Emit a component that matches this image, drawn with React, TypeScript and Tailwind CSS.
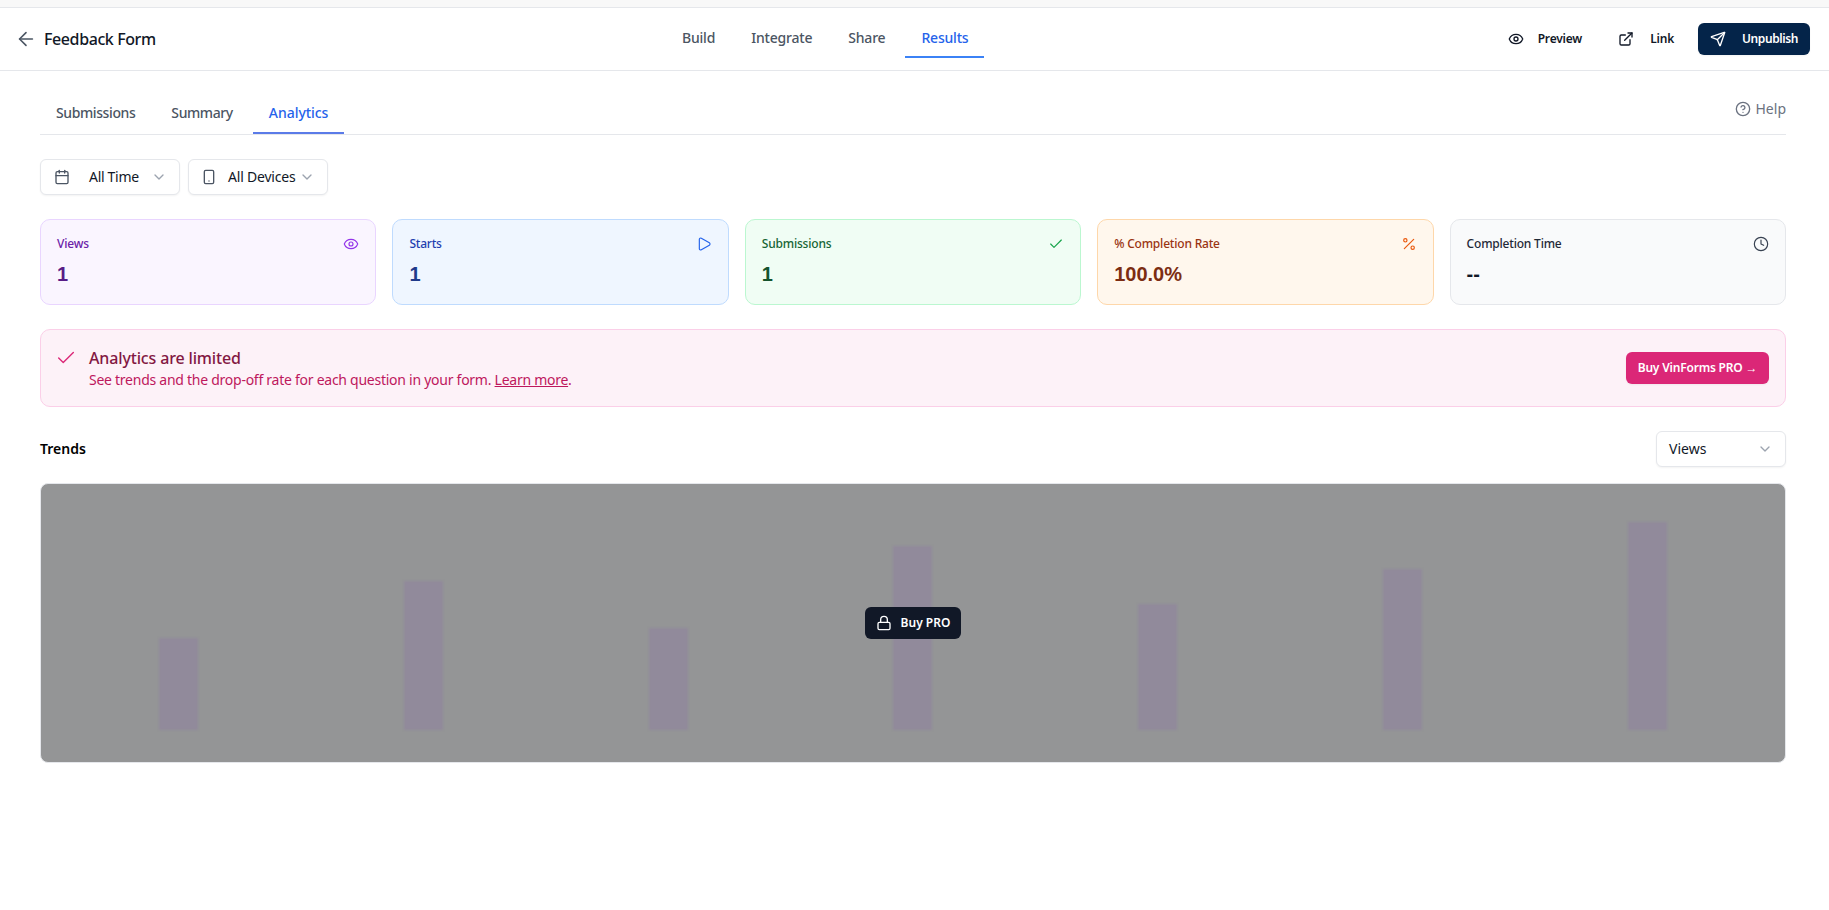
import {
  ArrowLeft,
  Calendar,
  Check,
  ChevronDown,
  CircleHelp,
  Clock,
  ExternalLink,
  Eye,
  Lock,
  Percent,
  Play,
  Send,
  Smartphone,
} from "lucide-react";

const headerTabs = ["Build", "Integrate", "Share", "Results"];
const subTabs = ["Submissions", "Summary", "Analytics"];

const stats = [
  { label: "Views", value: "1", Icon: Eye, box: "border-[#e9d5ff] bg-[#faf5ff]", labelText: "text-[#6b21a8]", valueText: "text-[#581c87]", iconText: "text-[#9333ea]" },
  { label: "Starts", value: "1", Icon: Play, box: "border-[#bfdbfe] bg-[#eff6ff]", labelText: "text-[#1e40af]", valueText: "text-[#1e3a8a]", iconText: "text-[#2563eb]" },
  { label: "Submissions", value: "1", Icon: Check, box: "border-[#bbf7d0] bg-[#f0fdf4]", labelText: "text-[#166534]", valueText: "text-[#14532d]", iconText: "text-[#16a34a]" },
  { label: "% Completion Rate", value: "100.0%", Icon: Percent, box: "border-[#fed7aa] bg-[#fff7ed]", labelText: "text-[#9a3412]", valueText: "text-[#7c2d12]", iconText: "text-[#ea580c]" },
  { label: "Completion Time", value: "--", Icon: Clock, box: "border-[#e5e7eb] bg-[#f9fafb]", labelText: "text-[#1f2937]", valueText: "text-[#111827]", iconText: "text-[#374151]" },
];

const barHeights = [92, 149, 102, 184, 126, 161, 208];

export default function App() {
  return (
    <div className="h-[910px] overflow-hidden bg-white font-['Noto_Sans',sans-serif] text-[#111827]">
      <div className="h-2 border-b border-[#e5e7eb] bg-[#f8f8f8]" />

      <header className="flex h-[63px] items-start border-b border-[#e5e7eb] pr-[19px]">
        <div className="flex h-[62px] w-[666px] items-center gap-[7px] pl-[15px]">
          <ArrowLeft className="h-[22px] w-[22px] text-[#4b5563]" strokeWidth={1.75} />
          <span className="text-base font-medium tracking-[-0.4px]">Feedback Form</span>
        </div>
        <nav className="mt-2 flex items-start gap-1">
          {headerTabs.map((tab) => (
            <button
              key={tab}
              type="button"
              className={`flex h-[42px] items-center border-b-2 px-4 pt-1 text-sm font-medium tracking-[-0.2px] ${
                tab === "Results" ? "border-[#3b82f6] text-[#2563eb]" : "border-transparent text-[#4b5563]"
              }`}
            >
              {tab}
            </button>
          ))}
        </nav>
        <div className="ml-auto flex h-[62px] items-center">
          <button type="button" className="flex items-center gap-[14px] text-xs font-semibold tracking-[-0.2px]">
            <Eye className="h-4 w-4" />
            Preview
          </button>
          <button type="button" className="ml-9 flex items-center gap-4 text-xs font-semibold tracking-[-0.2px]">
            <ExternalLink className="h-4 w-4" />
            Link
          </button>
          <button
            type="button"
            className="ml-6 flex h-8 w-[112px] items-center gap-4 rounded-md bg-[#042449] pl-3 text-xs font-semibold tracking-[-0.4px] text-white shadow-xs"
          >
            <Send className="h-4 w-4" />
            Unpublish
          </button>
        </div>
      </header>

      <main className="ml-10 w-[1746px]">
        <div className="flex h-16 items-end justify-between border-b border-[#e5e7eb]">
          <div className="flex gap-1">
            {subTabs.map((tab) => (
              <button
                key={tab}
                type="button"
                className={`h-10 border-b-2 px-4 text-sm font-medium ${
                  tab === "Analytics"
                    ? "border-[#5b7be8] tracking-[-0.05px] text-[#2563eb]"
                    : "border-transparent tracking-[-0.4px] text-[#4b5563]"
                }`}
              >
                {tab}
              </button>
            ))}
          </div>
          <div className="mb-[15px] flex items-center gap-[5px] text-sm text-[#6b7280]">
            <CircleHelp className="h-4 w-4" />
            Help
          </div>
        </div>

        <div className="mt-6 flex gap-2">
          <button type="button" className="flex h-9 w-[140px] items-center rounded-md border border-[#e5e7eb] bg-white pl-[13px] text-sm tracking-[-0.3px] shadow-xs">
            <Calendar className="h-4 w-4 text-[#4b5563]" />
            <span className="ml-[19px]">All Time</span>
            <ChevronDown className="ml-auto mr-[12px] h-4 w-4 text-[#9ca3af]" />
          </button>
          <button type="button" className="flex h-9 w-[140px] items-center rounded-md border border-[#e5e7eb] bg-white pl-[12px] text-sm tracking-[-0.2px] shadow-xs">
            <Smartphone className="h-4 w-4 text-[#4b5563]" />
            <span className="ml-[11px]">All Devices</span>
            <ChevronDown className="ml-auto mr-[12px] h-4 w-4 text-[#9ca3af]" />
          </button>
        </div>

        <div className="mt-6 grid grid-cols-5 gap-4">
          {stats.map(({ label, value, Icon, box, labelText, valueText, iconText }) => (
            <div key={label} className={`h-[86px] rounded-[10px] border p-4 ${box}`}>
              <div className="flex h-4 items-center justify-between">
                <span className={`text-xs font-medium tracking-[-0.2px] ${labelText}`}>{label}</span>
                <Icon className={`h-4 w-4 ${iconText}`} strokeWidth={1.75} />
              </div>
              <div className={`mt-2 font-['Liberation_Sans',sans-serif] text-xl font-bold ${valueText}`}>{value}</div>
            </div>
          ))}
        </div>

        <div className="mt-6 flex h-[78px] items-center justify-between rounded-[10px] border border-[#fbcfe8] bg-[#fdf2f8] pl-[14px] pr-4">
          <div className="flex items-start gap-3">
            <Check className="mt-px h-[22px] w-[22px] text-[#db2777]" strokeWidth={1.5} />
            <div>
              <div className="text-base font-medium leading-6 tracking-[-0.15px] text-[#831843]">Analytics are limited</div>
              <div className="text-sm leading-5 tracking-[-0.26px] text-[#be185d]">
                See trends and the drop-off rate for each question in your form.{" "}
                <span className="underline">Learn more</span>.
              </div>
            </div>
          </div>
          <button type="button" className="h-8 w-[143px] rounded-md bg-[#db2777] text-xs font-semibold tracking-[-0.2px] text-white shadow-xs">
            Buy VinForms PRO →
          </button>
        </div>

        <div className="mt-6 flex items-center justify-between">
          <h2 className="text-sm font-semibold text-black">Trends</h2>
          <button type="button" className="flex h-9 w-[130px] items-center justify-between rounded-md border border-[#e5e7eb] bg-white pl-[12px] pr-[12px] text-sm shadow-xs">
            Views
            <ChevronDown className="h-4 w-4 text-[#9ca3af]" />
          </button>
        </div>

        <div className="relative mt-4 h-[280px] overflow-hidden rounded-lg border border-[#e5e7eb] bg-[#949596]">
          <div className="grid h-full grid-cols-7 items-end px-[15px] pb-8">
            {barHeights.map((height, i) => (
              <div key={i} className="flex justify-center">
                <div className="w-[39px] bg-[#918a9b] blur-[1px]" style={{ height }} />
              </div>
            ))}
          </div>
          <button
            type="button"
            className="absolute left-1/2 top-1/2 flex h-8 w-[96px] -translate-x-1/2 -translate-y-1/2 items-center justify-center gap-[9px] rounded-md bg-[#111827] text-xs font-semibold text-white"
          >
            <Lock className="h-4 w-4" />
            Buy PRO
          </button>
        </div>
      </main>
    </div>
  );
}
